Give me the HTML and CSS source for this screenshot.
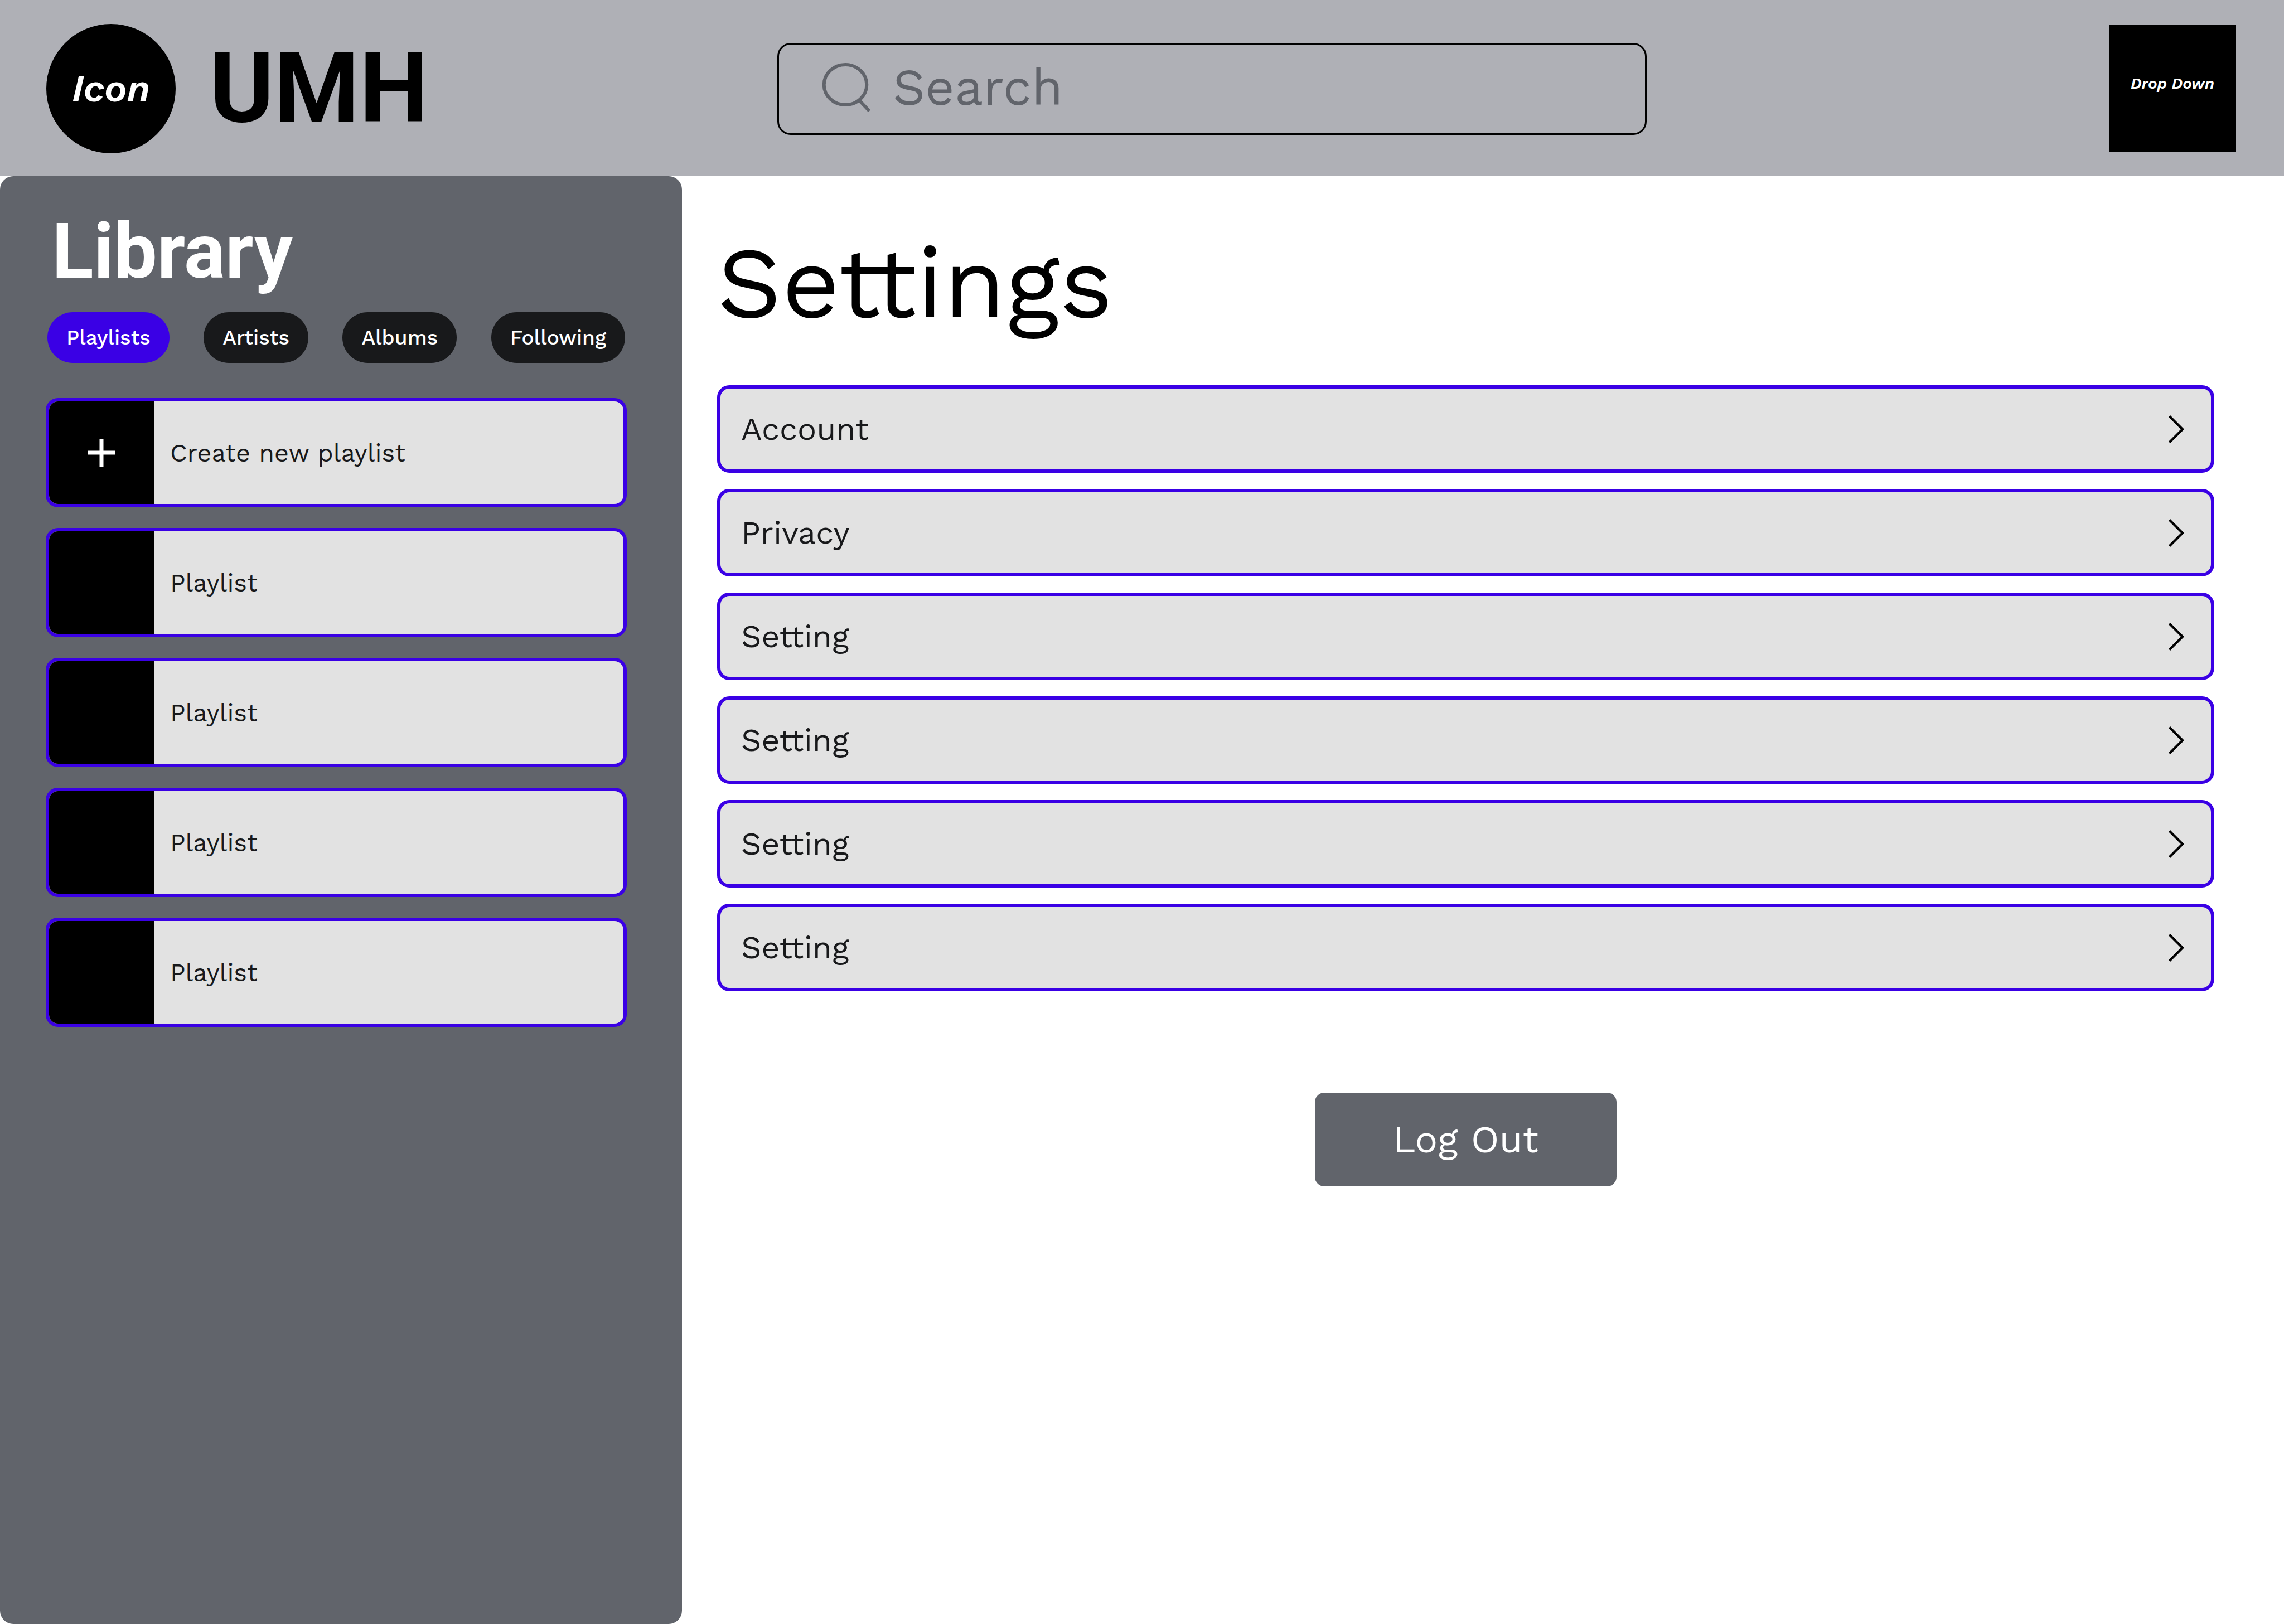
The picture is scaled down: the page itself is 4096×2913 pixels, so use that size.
FILE: index.html
```html
<!DOCTYPE html>
<html lang="en">
<head>
<meta charset="utf-8">
<title>UMH – Settings</title>
<link rel="stylesheet" href="styles.css">
</head>
<body>
<div class="app">
  <header class="topbar">
    <a class="brand" href="#">
      <span class="brand-icon">Icon</span>
      <span class="brand-name">UMH</span>
    </a>
    <label class="search">
      <svg class="search-icon" viewBox="0 0 94 94" aria-hidden="true">
        <ellipse cx="46" cy="40" rx="38.3" ry="36"/>
        <path d="M72.5 69.5L87 85"/>
      </svg>
      <input class="search-input" type="search" placeholder="Search" aria-label="Search">
    </label>
    <button class="dropdown" type="button" aria-haspopup="menu">Drop Down</button>
  </header>

  <aside class="sidebar">
    <h2 class="sidebar-title">Library</h2>
    <div class="filters">
      <button class="pill pill-active" type="button">Playlists</button>
      <button class="pill" type="button">Artists</button>
      <button class="pill" type="button">Albums</button>
      <button class="pill" type="button">Following</button>
    </div>
    <nav class="playlists" aria-label="Playlists">
      <a class="playlist" href="#">
        <span class="thumb">
          <svg class="plus" viewBox="0 0 50 50" aria-hidden="true"><path d="M25 0V50M0 25H50"/></svg>
        </span>
        <span>Create new playlist</span>
      </a>
      <a class="playlist" href="#"><span class="thumb"></span><span>Playlist</span></a>
      <a class="playlist" href="#"><span class="thumb"></span><span>Playlist</span></a>
      <a class="playlist" href="#"><span class="thumb"></span><span>Playlist</span></a>
      <a class="playlist" href="#"><span class="thumb"></span><span>Playlist</span></a>
    </nav>
  </aside>

  <main class="content">
    <h1 class="page-title">Settings</h1>
    <nav class="settings" aria-label="Settings">
      <a class="setting" href="#">Account <svg class="chevron" viewBox="0 0 32 54" aria-hidden="true"><path d="M3.5 3.5L27 27L3.5 50.5"/></svg></a>
      <a class="setting" href="#">Privacy <svg class="chevron" viewBox="0 0 32 54" aria-hidden="true"><path d="M3.5 3.5L27 27L3.5 50.5"/></svg></a>
      <a class="setting" href="#">Setting <svg class="chevron" viewBox="0 0 32 54" aria-hidden="true"><path d="M3.5 3.5L27 27L3.5 50.5"/></svg></a>
      <a class="setting" href="#">Setting <svg class="chevron" viewBox="0 0 32 54" aria-hidden="true"><path d="M3.5 3.5L27 27L3.5 50.5"/></svg></a>
      <a class="setting" href="#">Setting <svg class="chevron" viewBox="0 0 32 54" aria-hidden="true"><path d="M3.5 3.5L27 27L3.5 50.5"/></svg></a>
      <a class="setting" href="#">Setting <svg class="chevron" viewBox="0 0 32 54" aria-hidden="true"><path d="M3.5 3.5L27 27L3.5 50.5"/></svg></a>
    </nav>
    <button class="logout" type="button">Log Out</button>
  </main>
</div>
</body>
</html>
```
FILE: styles.css
```css
:root {
  --bar: #afb0b6;
  --slate: #61646b;
  --accent: #3a00e5;
  --ink: #18191b;
  --surface: #e2e2e2;
}

* {
  box-sizing: border-box;
}

body {
  margin: 0;
  background: #fff;
  color: var(--ink);
  font-family: "Work Sans", Inter, sans-serif;
}

a {
  color: inherit;
  text-decoration: none;
}

button {
  margin: 0;
  padding: 0;
  border: 0;
  color: #fff;
  font: inherit;
  cursor: pointer;
}

.app {
  display: grid;
  grid-template-columns: 1223px 1fr;
  grid-template-rows: auto 1fr;
  min-height: 100vh;
}

/* Top bar */
.topbar {
  grid-column: 1 / -1;
  display: grid;
  grid-template-columns: 1311fr 1559fr 1057fr;
  align-items: center;
  padding: 43px 86px 41px 83px;
  background: var(--bar);
}

.brand {
  display: flex;
  align-items: center;
  gap: 61px;
}

.brand-icon {
  display: flex;
  align-items: center;
  justify-content: center;
  width: 232px;
  height: 232px;
  border-radius: 50%;
  background: #000;
  color: #fff;
  font-size: 68px;
  font-style: italic;
  font-weight: 600;
}

.brand-name {
  color: #000;
  font-family: Roboto, sans-serif;
  font-size: 175px;
  font-weight: 700;
  line-height: 200px;
}

.search {
  display: flex;
  align-items: center;
  gap: 37px;
  height: 165px;
  padding: 0 73px;
  border: 3px solid #000;
  border-radius: 24px;
}

.search-icon {
  flex: none;
  width: 94px;
  height: 94px;
  fill: none;
  stroke: var(--slate);
  stroke-width: 6;
  stroke-linecap: round;
}

.search-input {
  flex: 1;
  min-width: 0;
  height: 100%;
  padding: 0 0 6px;
  border: 0;
  outline: 0;
  background: transparent;
  color: var(--slate);
  font: inherit;
  font-size: 91px;
  appearance: none;
}

.search-input::placeholder {
  color: var(--slate);
  opacity: 1;
}

.dropdown {
  justify-self: end;
  width: 228px;
  height: 228px;
  padding-bottom: 20px;
  background: #000;
  font-size: 28px;
  font-style: italic;
  font-weight: 600;
}

/* Library */
.sidebar {
  padding: 55px 99px 99px 82px;
  border-radius: 24px;
  background: var(--slate);
}

.sidebar-title {
  margin: 0 0 29px;
  padding-left: 11px;
  color: #fff;
  font-family: Roboto, sans-serif;
  font-size: 138px;
  font-weight: 700;
  line-height: 160px;
}

.filters {
  display: flex;
  justify-content: space-between;
  margin-bottom: 63px;
  padding: 0 3px;
}

.pill {
  height: 91px;
  padding: 0 34px;
  border-radius: 46px;
  background: var(--ink);
  font-size: 37px;
  font-weight: 500;
}

.pill-active {
  background: var(--accent);
}

.playlists {
  display: grid;
  gap: 37px;
}

.playlist {
  display: flex;
  align-items: center;
  gap: 29px;
  height: 196px;
  overflow: hidden;
  border: 6px solid var(--accent);
  border-radius: 22px;
  background: var(--surface);
  font-size: 45px;
}

.thumb {
  display: flex;
  align-items: center;
  justify-content: center;
  width: 188px;
  height: 100%;
  background: #000;
}

.plus {
  width: 50px;
  height: 50px;
  stroke: #fff;
  stroke-width: 7;
}

/* Settings */
.content {
  display: flex;
  flex-direction: column;
  padding: 81px 125px 81px 63px;
}

.page-title {
  margin: 0 0 74px;
  color: #000;
  font-size: 181px;
  font-weight: 400;
  line-height: 220px;
}

.settings {
  display: grid;
  gap: 29px;
  margin-bottom: 182px;
}

.setting {
  display: flex;
  align-items: center;
  justify-content: space-between;
  height: 157px;
  padding: 0 46px 0 37px;
  border: 6px solid var(--accent);
  border-radius: 22px;
  background: var(--surface);
  font-size: 57px;
}

.chevron {
  width: 32px;
  height: 54px;
  fill: none;
  stroke: #000;
  stroke-width: 4.4;
}

.logout {
  align-self: center;
  width: 541px;
  height: 168px;
  border-radius: 17px;
  background: var(--slate);
  font-size: 68px;
}
```
